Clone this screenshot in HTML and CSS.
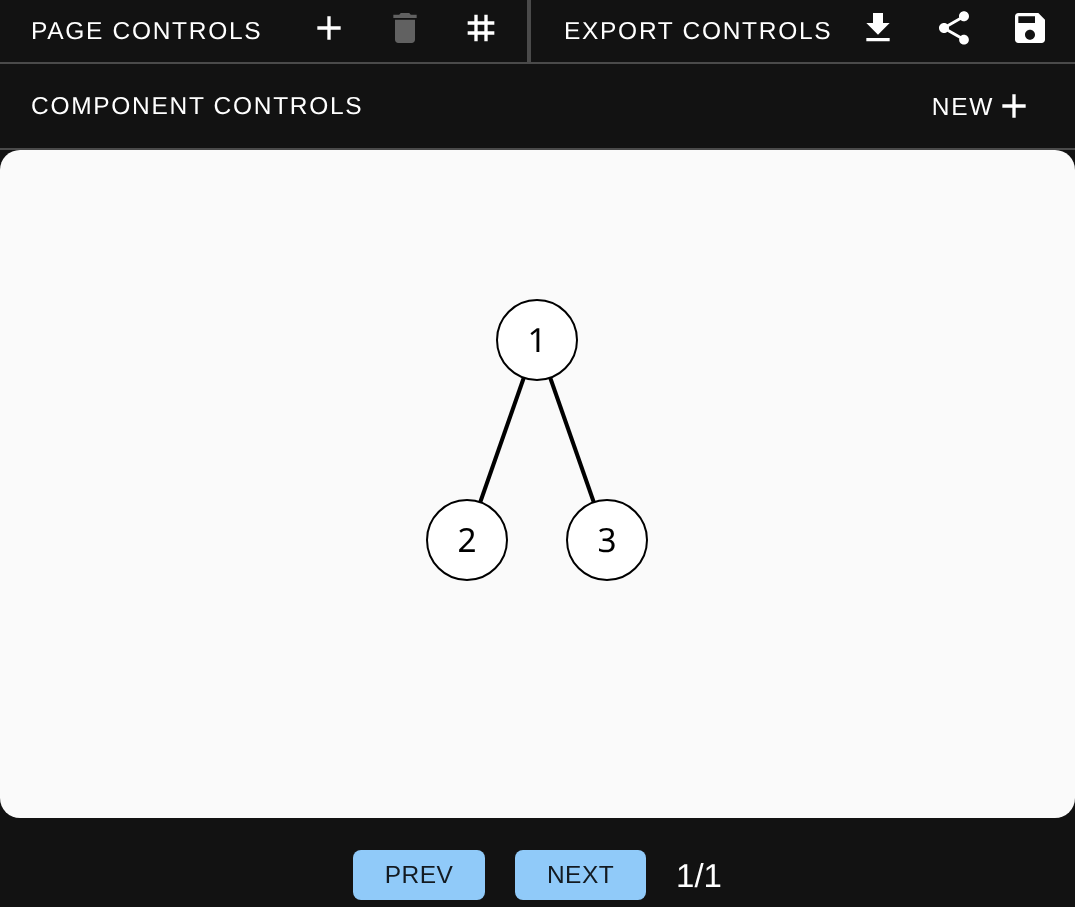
FILE: index.html
```html
<!DOCTYPE html>
<html lang="en">
<head>
  <meta charset="UTF-8">
  <title>Graph editor</title>
  <link rel="stylesheet" href="styles.css">
</head>
<body>

  <div class="toolbar">
    <div class="section page-section">
      <span class="label">PAGE CONTROLS</span>
      <button class="icon-btn first-btn">
        <svg viewBox="0 0 24 24"><path d="M19 13h-6v6h-2v-6H5v-2h6V5h2v6h6v2z"/></svg>
      </button>
      <button class="icon-btn disabled">
        <svg viewBox="0 0 24 24"><path d="M6 19c0 1.1.9 2 2 2h8c1.1 0 2-.9 2-2V7H6v12zM19 4h-3.5l-1-1h-5l-1 1H5v2h14V4z"/></svg>
      </button>
      <button class="icon-btn">
        <svg viewBox="0 0 24 24"><path d="M20 10V8h-4V4h-2v4h-4V4H8v4H4v2h4v4H4v2h4v4h2v-4h4v4h2v-4h4v-2h-4v-4h4zm-6 4h-4v-4h4v4z"/></svg>
      </button>
    </div>
    <div class="section export-section">
      <span class="label">EXPORT CONTROLS</span>
      <button class="icon-btn first-btn">
        <svg viewBox="0 0 24 24"><path d="M19 9h-4V3H9v6H5l7 7 7-7zM5 18v2h14v-2H5z"/></svg>
      </button>
      <button class="icon-btn">
        <svg viewBox="0 0 24 24"><path d="M18 16.08c-.76 0-1.44.3-1.96.77L8.91 12.7c.05-.23.09-.46.09-.7s-.04-.47-.09-.7l7.05-4.11c.54.5 1.25.81 2.04.81 1.66 0 3-1.34 3-3s-1.34-3-3-3-3 1.34-3 3c0 .24.04.47.09.7L8.04 9.81C7.5 9.31 6.79 9 6 9c-1.66 0-3 1.34-3 3s1.34 3 3 3c.79 0 1.5-.31 2.04-.81l7.12 4.16c-.05.21-.08.43-.08.65 0 1.61 1.31 2.92 2.92 2.92s2.92-1.31 2.92-2.92-1.31-2.92-2.92-2.92z"/></svg>
      </button>
      <button class="icon-btn">
        <svg viewBox="0 0 24 24"><path d="M17 3H5c-1.11 0-2 .9-2 2v14c0 1.1.89 2 2 2h14c1.1 0 2-.9 2-2V7l-4-4zm-5 16c-1.66 0-3-1.34-3-3s1.34-3 3-3 3 1.34 3 3-1.34 3-3 3zm3-10H5V5h10v4z"/></svg>
      </button>
    </div>
  </div>

  <div class="component-bar">
    <span class="label">COMPONENT CONTROLS</span>
    <button class="new-btn">
      <span class="label">NEW</span>
      <svg viewBox="0 0 24 24"><path d="M19 13h-6v6h-2v-6H5v-2h6V5h2v6h6v2z"/></svg>
    </button>
  </div>

  <div class="canvas">
    <svg class="graph" viewBox="0 0 1075 668">
      <line x1="537" y1="190" x2="467" y2="390" />
      <line x1="537" y1="190" x2="607" y2="390" />
      <circle cx="537" cy="190" r="40" />
      <circle cx="467" cy="390" r="40" />
      <circle cx="607" cy="390" r="40" />
      <text x="537" y="202">1</text>
      <text x="467" y="402">2</text>
      <text x="607" y="402">3</text>
    </svg>
  </div>

  <div class="pager">
    <button class="page-btn prev-btn">PREV</button>
    <button class="page-btn next-btn">NEXT</button>
    <span class="page-count">1/1</span>
  </div>

</body>
</html>
```

FILE: styles.css
```css
html, body {
  margin: 0;
  padding: 0;
  height: 100%;
  background-color: #121212;
  text-rendering: geometricPrecision;
  overflow: hidden;
}

button {
  border: none;
  background: none;
  padding: 0;
  cursor: pointer;
}

/* own layers, so the text is antialiased in gray */
.toolbar, .component-bar, .graph, .pager {
  will-change: transform;
}

.label {
  padding-top: 2px;
  font-family: "Liberation Sans", sans-serif;
  font-size: 24.5px;
  letter-spacing: 1.7px;
  color: white;
  white-space: nowrap;
}

.toolbar {
  display: flex;
  height: 62px;
  border-bottom: 2px solid #4a4a4a;
}

.section {
  display: flex;
  align-items: center;
}

.page-section {
  width: 527px;
  padding: 0 8px 0 31px;
  box-sizing: border-box;
}

.export-section {
  flex: 1;
  padding: 0 7px 0 33px;
  border-left: 4px solid #4a4a4a;
}

.icon-btn {
  display: flex;
  justify-content: center;
  align-items: center;
  align-self: flex-start;
  width: 76px;
  height: 56px;
}

.first-btn {
  margin-left: auto;
}

.icon-btn svg {
  width: 40px;
  height: 40px;
  fill: white;
}

.icon-btn.disabled svg {
  fill: #616161;
}

.component-bar {
  display: flex;
  justify-content: space-between;
  align-items: center;
  height: 84px;
  padding: 0 41px 0 31px;
  border-bottom: 2px solid #4a4a4a;
}

.new-btn {
  display: flex;
  align-items: center;
}

.new-btn svg {
  width: 40px;
  height: 40px;
  fill: white;
}

.canvas {
  height: 668px;
  background-color: #fafafa;
  border-radius: 20px;
}

.graph {
  display: block;
  width: 100%;
  height: 100%;
}

.graph line {
  stroke: black;
  stroke-width: 4;
}

.graph circle {
  fill: white;
  stroke: black;
  stroke-width: 2;
}

.graph text {
  font-family: "Noto Sans", sans-serif;
  font-size: 33.33px;
  text-anchor: middle;
  fill: black;
}

.pager {
  display: flex;
  justify-content: center;
  align-items: center;
  padding-top: 32px;
}

.page-btn {
  height: 50px;
  background-color: #90caf9;
  border-radius: 8px;
  font-family: "Liberation Sans", sans-serif;
  font-size: 24.5px;
  letter-spacing: 0.5px;
  color: rgba(0, 0, 0, 0.87);
}

.prev-btn {
  width: 132px;
  margin-right: 30px;
}

.next-btn {
  width: 131px;
}

.page-count {
  margin-left: 30px;
  padding-top: 2px;
  font-family: "Liberation Sans", sans-serif;
  font-size: 33px;
  color: white;
}
```
